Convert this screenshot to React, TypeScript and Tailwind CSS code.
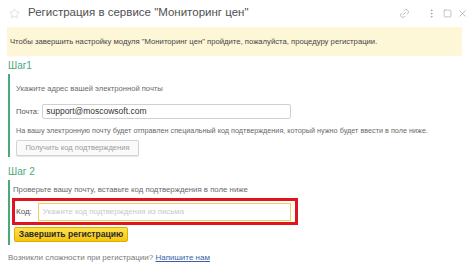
import { X, Link2, MoreVertical, Square, Star } from "lucide-react";

export default function App() {
  return (
    <div className="w-[474px] h-[272px] bg-white text-[#4d4d4d] font-['Liberation_Sans',Arial,sans-serif] overflow-hidden">
      {/* Title bar */}
      <div className="flex items-center h-[26px] pl-[9px] pr-[6px]">
        <Star size={11} strokeWidth={1.2} className="text-[#c8c8c8]" />
        <span className="ml-[8px] text-[11.5px] text-[#505050] leading-none">
          Регистрация в сервисе "Мониторинг цен"
        </span>
        <div className="ml-auto flex items-center text-[#9a9a9a]">
          <Link2 size={11} strokeWidth={1.3} className="-rotate-45" />
          <MoreVertical size={11} strokeWidth={1.6} className="ml-[16px]" />
          <Square size={9} strokeWidth={1.5} className="ml-[6px]" />
          <X size={11} strokeWidth={1.4} className="ml-[5px]" />
        </div>
      </div>

      {/* Info banner */}
      <div className="ml-[7px] mr-[12px] mt-[1px] h-[29px] bg-[#fdf7d8] flex items-center px-[3px] text-[7.7px] text-[#444]">
        Чтобы завершить настройку модуля "Мониторинг цен" пройдите, пожалуйста, процедуру регистрации.
      </div>

      <div className="pl-[8px] pt-[4px]">
        {/* Step 1 */}
        <div className="text-[10px] text-[#4aa97a] leading-[12px]">Шаг1</div>
        <div className="mt-[2px] border-l-2 border-[#4aa97a] pl-[6px] pt-[10px] pb-[1px] text-[7.6px] text-[#6a6a6a]">
          <div className="leading-[10px]">Укажите адрес вашей электронной почты</div>
          <div className="flex items-center mt-[10px]">
            <span className="text-[#555]">Почта:</span>
            <div className="ml-[3px] w-[249px] h-[15px] border border-[#d0d0d0] rounded-[2px] flex items-center px-[3px] text-[8.5px] text-[#333]">
              support@moscowsoft.com
            </div>
          </div>
          <div className="mt-[7px] leading-[10px] whitespace-nowrap text-[7.25px]">
            На вашу электронную почту будет отправлен специальный код подтверждения, который нужно будет ввести в поле ниже.
          </div>
          <div className="mt-[4px] w-[123px] h-[16px] border border-[#d4d4d4] rounded-[2px] bg-[#fafafa] flex items-center justify-center text-[#9a9a9a] shadow-[0_1px_0_#e6e6e6]">
            Получить код подтверждения
          </div>
        </div>

        {/* Step 2 */}
        <div className="mt-[9px] text-[10px] text-[#4aa97a] leading-[12px]">Шаг 2</div>
        <div className="mt-[2px] border-l-2 border-[#4aa97a] pl-[2px] pt-[5px] pb-[3px] text-[7.8px] text-[#6a6a6a]">
          <div className="pl-[1px] leading-[10px]">Проверьте вашу почту, вставьте код подтверждения в поле ниже</div>
          <div className="mt-[3px] w-[286px] h-[27px] border-[3px] border-[#e0141e] flex items-center pl-[1px]">
            <span className="text-[#555] text-[8px]">Код:</span>
            <div className="ml-[6px] w-[253px] h-[18px] border border-[#f3cf5a] flex items-center px-[4px] text-[#c8c8c8]">
              Укажите код подтверждения из письма
            </div>
          </div>
          <div className="ml-[2px] mt-[2px] w-[114px] h-[15px] rounded-[2px] bg-gradient-to-b from-[#ffe54a] to-[#f5c400] border border-[#dcae00] flex items-center justify-center text-[8.5px] font-bold text-[#2a2a2a]">
            Завершить регистрацию
          </div>
        </div>

        {/* Footer */}
        <div className="mt-[7px] text-[8px] text-[#7a7a7a]">
          Возникли сложности при регистрации?{" "}
          <span className="text-[#3b5fa8] underline">Напишите нам</span>
        </div>
      </div>
    </div>
  );
}
